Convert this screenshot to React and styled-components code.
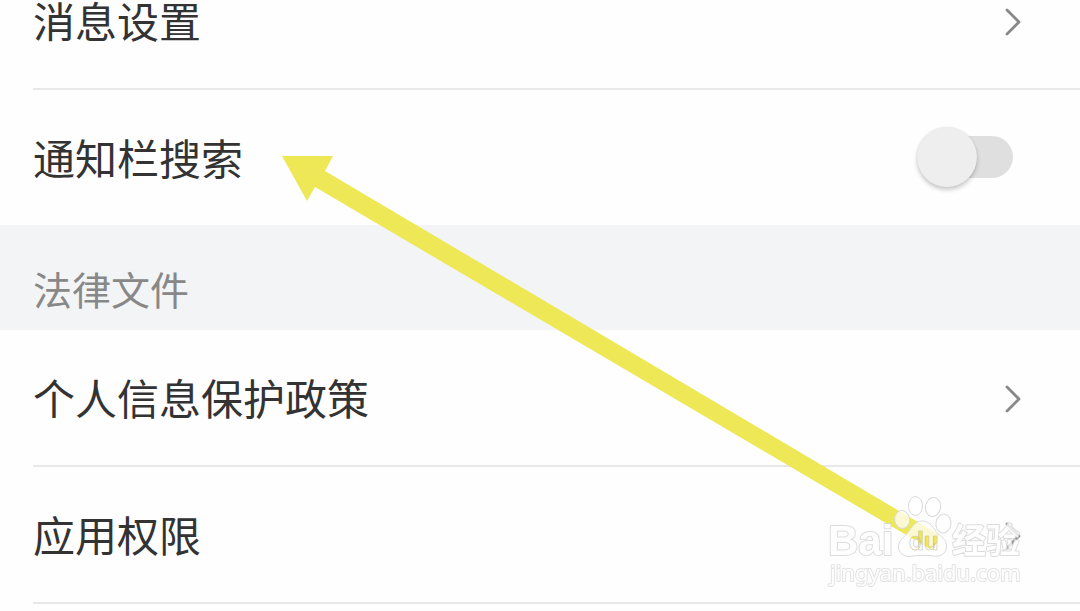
import React from "react";
import styled, { createGlobalStyle } from "styled-components";

const GlobalStyle = createGlobalStyle`
  * { box-sizing: border-box; }
  body {
    margin: 0;
    background: #fefefe;
    overflow: hidden;
    font-family: "Noto Sans CJK SC", sans-serif;
  }
`;

const Page = styled.main`
  position: relative;
  min-height: 100vh;
  overflow: hidden;
`;

/* The list is scrolled part of the way through its first row. */
const Settings = styled.div`
  margin-top: -47px;
`;

const List = styled.ul`
  margin: 0;
  padding: 0 0 0 33px;
  list-style: none;
`;

const Item = styled.li`
  border-bottom: ${(p) => (p.$last ? "none" : "2px solid #e8e8e8")};
`;

const RowLink = styled.a`
  display: flex;
  align-items: center;
  justify-content: space-between;
  height: 135px;
  padding: 2px 58px 0 0;
  color: #333;
  font-size: 42px;
  line-height: 60px;
  text-decoration: none;
`;

const RowLabel = styled(RowLink).attrs({ as: "label" })`
  padding: 2px 67px 0 0;
`;

const RowText = styled.span`
  padding-bottom: 4px;
`;

const SectionTitle = styled.h2`
  display: flex;
  align-items: center;
  height: 105px;
  margin: 0;
  padding: 20px 33px 0;
  background: #f3f4f6;
  color: #888;
  font-size: 39px;
  font-weight: 400;
  line-height: 56px;
`;

const ChevronIcon = styled.svg`
  width: 18px;
  height: 30px;
  fill: none;
  stroke: #888;
  stroke-width: 2.8;
  stroke-linecap: round;
  stroke-linejoin: round;
`;

const Switch = styled.input`
  appearance: none;
  display: flex;
  align-items: center;
  width: 96px;
  height: 60px;
  margin: 0 0 4px;

  &::before {
    content: "";
    width: 82px;
    height: 42px;
    margin-left: 14px;
    border-radius: 21px;
    background: #dfdfdf;
  }

  &::after {
    content: "";
    width: 60px;
    height: 60px;
    margin-left: -96px;
    border-radius: 50%;
    background: #eee;
    box-shadow: 0 3px 4px rgba(0, 0, 0, 0.2), 0 0 2px rgba(0, 0, 0, 0.08);
  }

  &:checked::after {
    margin-left: -60px;
  }
`;

const Annotation = styled.svg`
  position: absolute;
  top: 0;
  left: 0;
  width: 100%;
  pointer-events: none;
`;

const MarkText = styled.text`
  fill: #fff;
  opacity: 0.8;
  paint-order: stroke;
  stroke: ${(p) => p.$edge || "#d4d4d4"};
  stroke-width: 2;
  stroke-linejoin: round;
  font-family: ${(p) => p.$family};
  font-size: ${(p) => p.$size}px;
  font-weight: ${(p) => p.$weight || 400};
`;

const InnerText = styled.text`
  font-family: "Liberation Sans Narrow", Roboto, sans-serif;
  font-size: 26px;
  font-weight: 700;
`;

const latin = '"Liberation Sans", sans-serif';
const cjk = '"Noto Sans CJK SC", sans-serif';
const humanist = '"Noto Sans", sans-serif';

function Chevron() {
  return (
    <ChevronIcon viewBox="0 0 18 30" aria-hidden="true">
      <path d="M3 3 15 15 3 27" />
    </ChevronIcon>
  );
}

function LinkRow({ label, last }) {
  return (
    <Item $last={last}>
      <RowLink href="#">
        <RowText>{label}</RowText>
        <Chevron />
      </RowLink>
    </Item>
  );
}

function Overlay() {
  return (
    <Annotation viewBox="0 0 1080 611">
      <defs>
        <mask id="pad" maskUnits="userSpaceOnUse" x="890" y="510" width="65" height="55">
          <rect x="890" y="510" width="65" height="55" fill="#fff" />
          <InnerText x="909" y="550">du</InnerText>
        </mask>
      </defs>
      <path
        fill="#eee756"
        d="M282 156H333L325 171 938 534Q940 537 937 543L930 549 315 187 307 201Z"
      />
      <g fill="#fff" fillOpacity="0.75" stroke="#d9d9d9">
        <ellipse cx="915.5" cy="506" rx="7" ry="9.5" />
        <ellipse cx="933" cy="507" rx="7.5" ry="9.5" transform="rotate(8 933 507)" />
        <ellipse cx="902" cy="519.5" rx="7.5" ry="9" transform="rotate(-10 902 519)" />
        <ellipse cx="943.5" cy="523.5" rx="7.5" ry="9.5" transform="rotate(8 943 523)" />
        <path
          mask="url(#pad)"
          d="M922.5 521C930 521 933 528 938 534 943 538 947 541 946.500 547 946 554 940 557 933 556 926 555 920 555 913 556 904 558 898 553 898.500 546 899 540 905 537 909 531 913 525 916 521 922.500 521Z"
        />
      </g>
      <InnerText x="909" y="550" fill="none" stroke="#c4c4a0" strokeWidth="0.6">du</InnerText>
      <MarkText x="828" y="555" $family={latin} $size={42} $weight={700}>Bai</MarkText>
      <MarkText x="952" y="553" $family={cjk} $size={34} $weight={700}>经验</MarkText>
      <MarkText x="830" y="581" $family={humanist} $size={22} $edge="#dcdcdc">jingyan.baidu.com</MarkText>
    </Annotation>
  );
}

export default function App() {
  return (
    <Page>
      <GlobalStyle />
      <Settings>
        <List>
          <LinkRow label="消息设置" />
          <Item $last>
            <RowLabel htmlFor="notification-search">
              <RowText>通知栏搜索</RowText>
              <Switch id="notification-search" type="checkbox" role="switch" />
            </RowLabel>
          </Item>
        </List>
        <SectionTitle>法律文件</SectionTitle>
        <List>
          <LinkRow label="个人信息保护政策" />
          <LinkRow label="应用权限" />
        </List>
      </Settings>
      <Overlay />
    </Page>
  );
}
